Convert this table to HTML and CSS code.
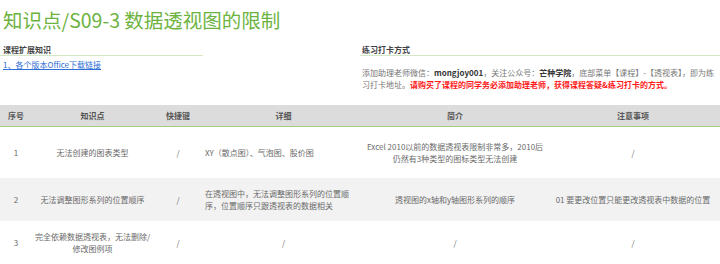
FILE: index.html
```html
<!DOCTYPE html>
<html lang="zh-CN">
<head>
<meta charset="utf-8">
<title>知识点/S09-3 数据透视图的限制</title>
<link rel="stylesheet" href="styles.css">
</head>
<body>
<h1 class="title">知识点/S09-3 数据透视图的限制</h1>
<div class="sections">
  <section class="sec sec-left">
    <h2 class="sec-head">课程扩展知识</h2>
    <a class="dl-link" href="#">1、各个版本Office下载链接</a>
  </section>
  <section class="sec sec-right">
    <h2 class="sec-head">练习打卡方式</h2>
    <p class="note">添加助理老师微信：<b class="strong">mongjoy001</b>，关注公众号：<b class="strong">芒种学院</b>，底部菜单【课程】-【透视表】，即为练<br>习打卡地址。<b class="warn">请购买了课程的同学务必添加助理老师，获得课程答疑&amp;练习打卡的方式。</b></p>
  </section>
</div>
<table class="grid">
  <colgroup>
    <col class="c1"><col class="c2"><col class="c3"><col class="c4"><col class="c5"><col class="c6">
  </colgroup>
  <thead>
    <tr class="head">
      <th>序号</th><th>知识点</th><th>快捷键</th><th>详细</th><th>简介</th><th>注意事项</th>
    </tr>
  </thead>
  <tbody>
    <tr class="row r1">
      <td>1</td>
      <td>无法创建的图表类型</td>
      <td>/</td>
      <td class="left">XY（散点图）、气泡图、股价图</td>
      <td>Excel 2010以前的数据透视表限制非常多，2010后<br>仍然有3种类型的图标类型无法创建</td>
      <td>/</td>
    </tr>
    <tr class="row r2 alt">
      <td>2</td>
      <td>无法调整图形系列的位置顺序</td>
      <td>/</td>
      <td class="left">在透视图中，无法调整图形系列的位置顺<br>序，位置顺序只跟透视表的数据相关</td>
      <td>透视图的x轴和y轴图形系列的顺序</td>
      <td>01 要更改位置只能更改透视表中数据的位置</td>
    </tr>
    <tr class="row r3">
      <td>3</td>
      <td>完全依赖数据透视表，无法删除/<br>修改图例项</td>
      <td>/</td>
      <td>/</td>
      <td>/</td>
      <td>/</td>
    </tr>
  </tbody>
</table>
</body>
</html>
```
FILE: styles.css
```css
html, body {
  margin: 0;
  padding: 0;
  background: #ffffff;
}
body {
  font-family: "Noto Sans CJK SC", "Noto Sans", sans-serif;
  color: #666666;
}
.title {
  margin: 0;
  padding: 7px 0 0 3px;
  font-size: 19.5px;
  line-height: 26px;
  font-weight: normal;
  color: #6db33f;
  white-space: nowrap;
}
.sections {
  display: flex;
  margin-top: 12px;
}
.sec-left {
  width: 203px;
  flex: none;
}
.sec-right {
  flex: 1;
  margin-left: 157px;
}
.sec-head {
  margin: 0;
  padding-left: 2px;
  font-size: 8px;
  line-height: 10px;
  font-weight: bold;
  color: #444444;
  border-bottom: 1px solid #d3e8c5;
}
.sec-left .sec-head {
  padding-left: 3px;
}
.dl-link {
  display: block;
  margin-top: 3px;
  padding-left: 3px;
  font-size: 8px;
  line-height: 12px;
  color: #2f6fd6;
  text-decoration: underline;
  white-space: nowrap;
}
.note {
  margin: 11px 0 0;
  padding-left: 2px;
  font-size: 8px;
  line-height: 12px;
  color: #777777;
  white-space: nowrap;
}
.strong {
  color: #333333;
}
.warn {
  color: #ff1a1a;
}
.grid {
  margin-top: 14px;
  width: 720px;
  table-layout: fixed;
  border-collapse: separate;
  border-spacing: 0;
  font-size: 8px;
  line-height: 12px;
}
.c1 { width: 32px; }
.c2 { width: 121px; }
.c3 { width: 50px; }
.c4 { width: 161px; }
.c5 { width: 182px; }
.c6 { width: auto; }
.grid th {
  height: 21px;
  padding: 0;
  background: #dcdcdc;
  border-bottom: 1px solid #9fd07e;
  color: #555555;
  font-weight: bold;
  text-align: center;
  white-space: nowrap;
}
.grid td {
  padding: 0;
  text-align: center;
  white-space: nowrap;
  color: #6a6a6a;
}
.grid td.left {
  text-align: left;
  padding-left: 2px;
}
.r1 td { height: 51px; }
.r2 td { height: 43px; }
.r3 td { height: 43px; }
.alt td {
  background: #f2f2f2;
}
```
